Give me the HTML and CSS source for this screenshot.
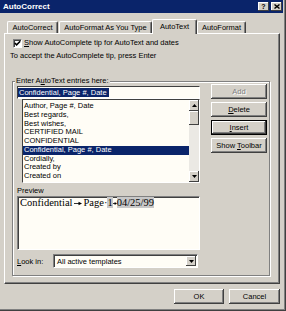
FILE: index.html
```html
<!DOCTYPE html>
<html lang="en">
<head>
  <meta charset="UTF-8" />
  <title>AutoCorrect</title>
  <link rel="stylesheet" href="styles.css">
</head>
<body>
  <div class="dialog">
    <div class="titlebar">
      <span class="title">AutoCorrect</span>
      <span class="title-btn">?</span>
      <span class="title-btn">
        <svg width="6" height="5" viewBox="0 0 6 5"><path d="M0.5 0.5 L5.5 4.5 M5.5 0.5 L0.5 4.5" stroke="#000" stroke-width="1.4"/></svg>
      </span>
    </div>

    <div class="tabs">
      <div class="tab tab-correct">AutoCorrect</div>
      <div class="tab tab-typing">AutoFormat As You Type</div>
      <div class="tab tab-text active">AutoText</div>
      <div class="tab tab-format">AutoFormat</div>
    </div>

    <div class="panel">
      <div class="check-row">
        <span class="checkbox">
          <svg width="7" height="7" viewBox="0 0 7 7"><path d="M0.8 3 L2.6 4.8 L6.2 1.2" fill="none" stroke="#000" stroke-width="1.6"/></svg>
        </span>
        <span><u>S</u>how AutoComplete tip for AutoText and dates</span>
      </div>
      <div class="hint">To accept the AutoComplete tip, press Enter</div>

      <fieldset class="group">
        <legend>Enter A<u>u</u>toText entries here:</legend>
        <div class="group-body">
          <div class="left-col">
            <div class="entry"><span class="sel">Confidential, Page #, Date</span></div>
            <div class="list">
              <ul class="items">
                <li>Author, Page #, Date</li>
                <li>Best regards,</li>
                <li>Best wishes,</li>
                <li>CERTIFIED MAIL</li>
                <li>CONFIDENTIAL</li>
                <li class="selected">Confidential, Page #, Date</li>
                <li>Cordially,</li>
                <li>Created by</li>
                <li>Created on</li>
              </ul>
              <div class="scrollbar">
                <div class="sb-btn">
                  <svg width="5" height="3" viewBox="0 0 5 3"><polygon points="2.5,0 5,3 0,3" fill="#000"/></svg>
                </div>
                <div class="sb-thumb"></div>
                <div class="sb-track"></div>
                <div class="sb-btn">
                  <svg width="5" height="3" viewBox="0 0 5 3"><polygon points="0,0 5,0 2.5,3" fill="#000"/></svg>
                </div>
              </div>
            </div>

            <div class="preview-label">Preview</div>
            <div class="preview">Confidential<span class="tab-mark"><svg width="8" height="5" viewBox="0 0 8 5"><path d="M0 2.5 H5" stroke="#000" stroke-width="0.8"/><polygon points="4.5,0.8 8,2.5 4.5,4.2" fill="#000"/></svg></span>Page<span class="space-mark">·</span><span class="field">1</span><span class="tab-mark short"><svg width="4" height="5" viewBox="0 0 4 5"><path d="M0 2.5 H2" stroke="#000" stroke-width="0.8"/><polygon points="1.6,1 4,2.5 1.6,4" fill="#000"/></svg></span><span class="field">04/25/99</span></div>

            <div class="lookin-row">
              <span class="lookin-label"><u>L</u>ook in:</span>
              <div class="combo">
                <span class="combo-text">All active templates</span>
                <span class="combo-btn">
                  <svg width="5" height="3" viewBox="0 0 5 3"><polygon points="0,0 5,0 2.5,3" fill="#000"/></svg>
                </span>
              </div>
            </div>
          </div>

          <div class="side-buttons">
            <button class="btn disabled">Add</button>
            <button class="btn"><u>D</u>elete</button>
            <button class="btn btn-default"><u>I</u>nsert</button>
            <button class="btn">Show <u>T</u>oolbar</button>
          </div>
        </div>
      </fieldset>
    </div>

    <div class="footer">
      <button class="btn btn-ok">OK</button>
      <button class="btn btn-cancel">Cancel</button>
    </div>
  </div>
</body>
</html>
```

FILE: styles.css
```css
* {
  box-sizing: border-box;
}

body {
  margin: 0;
  background: #d4d0c8;
  font-family: "Liberation Sans", Arial, sans-serif;
  font-size: 7.5px;
  color: #000;
  overflow: hidden;
}

.dialog {
  width: 286px;
  height: 311px;
  background: #d4d0c8;
  box-shadow: inset -1px -1px #404040, inset -2px -2px #808080;
  display: flex;
  flex-direction: column;
}

/* title bar */
.titlebar {
  width: 283px;
  height: 13px;
  background: #0a246a;
  display: flex;
  align-items: center;
  gap: 2px;
  padding: 0 1px 0 3px;
}

.title {
  flex: 1;
  color: #fff;
  font-weight: bold;
  font-size: 8px;
  line-height: 13px;
}

.title-btn {
  width: 11px;
  height: 9px;
  background: #d4d0c8;
  box-shadow: inset -1px -1px #404040, inset 1px 1px #fff;
  display: flex;
  align-items: center;
  justify-content: center;
  font-weight: bold;
  font-size: 7px;
  line-height: 9px;
}

/* tabs */
.tabs {
  display: flex;
  align-items: flex-end;
  height: 14px;
  margin: 6px 0 0 7px;
}

.tab {
  height: 12px;
  line-height: 11px;
  text-align: center;
  white-space: nowrap;
  border-top: 1px solid #fff;
  border-left: 1px solid #fff;
  border-right: 1px solid #404040;
  border-radius: 2px 2px 0 0;
  box-shadow: inset -1px 0 #808080;
}

.tab-correct { width: 51px; }
.tab-typing { width: 93px; margin-left: 1px; }
.tab-format { width: 49px; }

.tab.active {
  width: 45px;
  height: 15px;
  line-height: 13px;
  margin-bottom: -1px;
  background: #d4d0c8;
  position: relative;
  z-index: 1;
}

/* tab page */
.panel {
  margin-left: 4px;
  width: 276px;
  height: 251px;
  border-top: 1px solid #fff;
  border-left: 1px solid #fff;
  border-right: 1px solid #404040;
  border-bottom: 1px solid #404040;
  box-shadow: inset -1px -1px #808080;
  padding-top: 4px;
  display: flex;
  flex-direction: column;
}

.check-row {
  display: flex;
  align-items: center;
  gap: 2px;
  height: 10px;
  line-height: 10px;
  margin-left: 8px;
}

.checkbox {
  width: 9px;
  height: 9px;
  background: #fff;
  border-top: 1px solid #808080;
  border-left: 1px solid #808080;
  border-right: 1px solid #fff;
  border-bottom: 1px solid #fff;
  box-shadow: inset 1px 1px #404040;
  display: flex;
  align-items: center;
  justify-content: center;
}

.hint {
  margin: 3px 0 0 5px;
  line-height: 10px;
}

/* group box */
.group {
  margin: 17px 0 0 7px;
  width: 258px;
  min-width: 0;
  padding: 0 2px 7px 4px;
  border: 1px solid #808080;
  box-shadow: inset 1px 1px #fff, 1px 1px #fff;
}

.group legend {
  line-height: 6px;
  padding: 0 1px;
  margin-left: -2px;
  background: #d4d0c8;
}

.group-body {
  display: flex;
  align-items: flex-start;
}

.left-col {
  width: 183px;
  display: flex;
  flex-direction: column;
}

.entry {
  height: 13px;
  margin-top: 2px;
  padding-top: 1px;
  line-height: 9px;
  background: #fffdf6;
  border-top: 1px solid #404040;
  border-left: 1px solid #404040;
  border-right: 1px solid #fff;
  border-bottom: 1px solid #fff;
  white-space: nowrap;
}

.sel {
  display: inline-block;
  padding: 0 2px 0 1px;
  background: #0a246a;
  color: #fff;
}

.list {
  width: 178px;
  height: 84px;
  margin-left: 5px;
  display: flex;
  background: #fffdf6;
  border-top: 1px solid #404040;
  border-left: 1px solid #404040;
  border-right: 1px solid #fff;
  border-bottom: 1px solid #fff;
}

.items {
  flex: 1;
  list-style: none;
  margin: 0;
  padding: 2px 0 0 0;
}

.items li {
  line-height: 8.75px;
  padding-left: 1px;
  white-space: nowrap;
}

.items li.selected {
  background: #0a246a;
  color: #fff;
}

.scrollbar {
  width: 10px;
  display: flex;
  flex-direction: column;
}

.sb-btn,
.sb-thumb {
  background: #d4d0c8;
  box-shadow: inset -1px -1px #404040, inset 1px 1px #fff;
}

.sb-btn {
  height: 11px;
  display: flex;
  align-items: center;
  justify-content: center;
}

.sb-thumb {
  height: 14px;
}

.sb-track {
  flex: 1;
  background: #ebe9e4;
}

.preview-label {
  margin-top: 3px;
  line-height: 10px;
}

.preview {
  height: 54px;
  padding-left: 2px;
  font-family: "Liberation Serif", "Times New Roman", serif;
  font-size: 10.5px;
  line-height: 12px;
  white-space: nowrap;
  background: #fffdf6;
  border-top: 1px solid #808080;
  border-left: 1px solid #808080;
  border-right: 1px solid #fff;
  border-bottom: 1px solid #fff;
  box-shadow: inset 1px 1px #404040;
}

.tab-mark {
  display: inline-block;
  width: 11px;
  text-align: center;
}

.tab-mark.short {
  width: 4px;
}

.field {
  background: #c8c8c8;
}

.lookin-row {
  display: flex;
  align-items: center;
  height: 14px;
  margin-top: 4px;
}

.lookin-label {
  width: 36px;
}

.combo {
  width: 145px;
  height: 14px;
  display: flex;
  align-items: center;
  padding: 1px;
  background: #fffdf6;
  border-top: 1px solid #808080;
  border-left: 1px solid #808080;
  border-right: 1px solid #fff;
  border-bottom: 1px solid #fff;
  box-shadow: inset 1px 1px #404040;
}

.combo-text {
  flex: 1;
  padding-left: 2px;
}

.combo-btn {
  width: 10px;
  height: 10px;
  background: #d4d0c8;
  box-shadow: inset -1px -1px #404040, inset 1px 1px #fff;
  display: flex;
  align-items: center;
  justify-content: center;
}

/* buttons */
.side-buttons {
  width: 56px;
  margin-left: 11px;
  display: flex;
  flex-direction: column;
  gap: 3px;
}

.btn {
  height: 15px;
  padding: 0;
  font: inherit;
  color: #000;
  background: #d4d0c8;
  border: none;
  border-radius: 0;
  box-shadow: inset -1px -1px #404040, inset 1px 1px #fff, inset -2px -2px #808080;
}

.btn-default {
  box-shadow: inset 0 0 0 1px #000, inset -2px -2px #404040, inset 2px 2px #fff, inset -3px -3px #808080;
}

.btn.disabled {
  color: #808080;
  text-shadow: 1px 1px #fff;
}

.footer {
  display: flex;
  justify-content: flex-end;
  gap: 5px;
  margin-top: 5px;
  padding-right: 6px;
}

.btn-ok { width: 50px; }
.btn-cancel { width: 51px; }
```
